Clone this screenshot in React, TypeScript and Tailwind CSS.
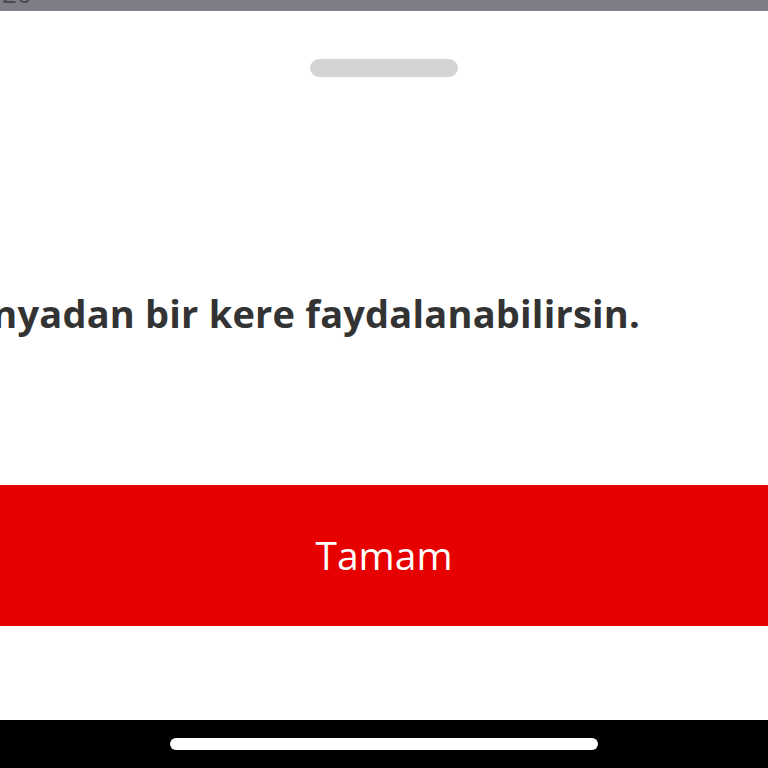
export default function App() {
  return (
    <div className="flex h-[768px] w-[768px] flex-col overflow-hidden bg-white font-['Open_Sans',sans-serif]">
      {/* dimmed backdrop peeking above the sheet */}
      <div className="h-[11px] shrink-0 overflow-hidden bg-[#7f7e88] pl-[2px]">
        <span className="-mt-[22px] block text-[26px] leading-[30px] text-[#4a4a52]">20</span>
      </div>

      <div className="flex flex-1 flex-col">
        <div className="flex justify-center pt-[48px]">
          <div className="h-[18px] w-[148px] rounded-full bg-[#d4d4d4]" />
        </div>

        <div className="mt-[212px] flex justify-end overflow-hidden whitespace-nowrap pr-[128px]">
          <p className="text-[38px] font-bold leading-[48px] tracking-[0.2px] text-[#333333]">
            Bu kampanyadan bir kere faydalanabilirsin.
          </p>
        </div>

        <button className="mt-[148px] flex h-[141px] w-full items-center justify-center bg-[#e60000] text-[39px] font-normal text-white">
          Tamam
        </button>
      </div>

      {/* system navigation bar */}
      <div className="flex h-[48px] shrink-0 items-start justify-center bg-black pt-[18px]">
        <div className="h-[12px] w-[428px] rounded-full bg-white" />
      </div>
    </div>
  );
}
